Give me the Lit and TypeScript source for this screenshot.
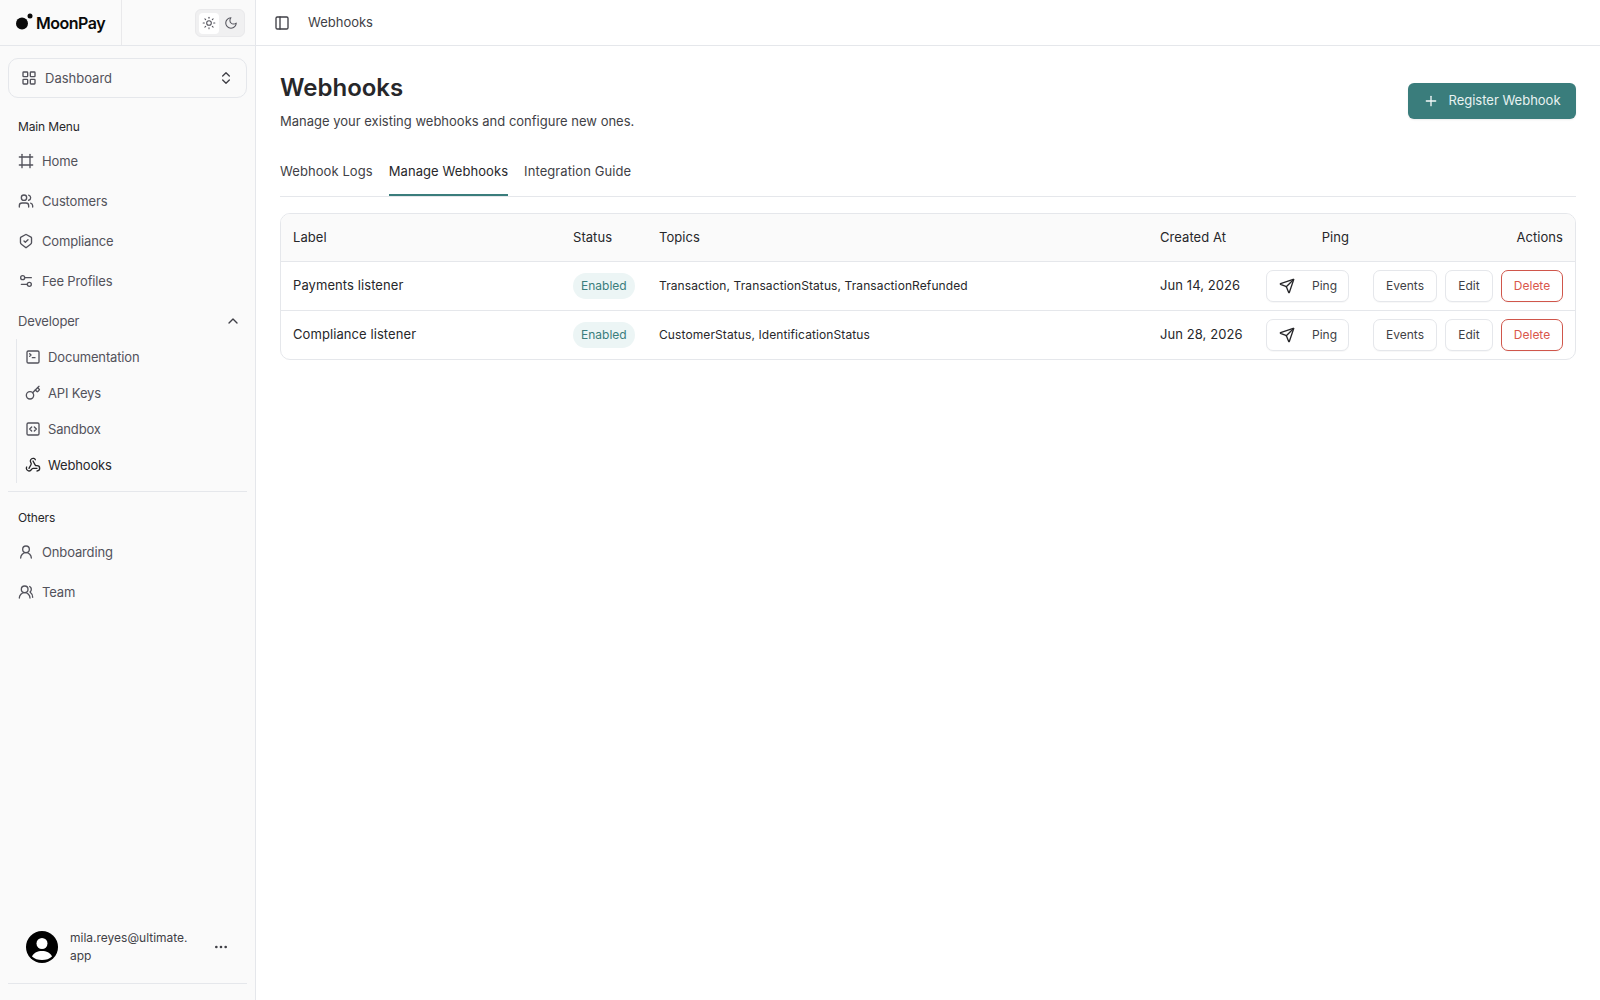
import { LitElement, html, css, svg, TemplateResult } from "lit";
import { customElement } from "lit/decorators.js";

const I: Record<string, TemplateResult> = {
  frame: svg`<line x1="22" x2="2" y1="6" y2="6"/><line x1="22" x2="2" y1="18" y2="18"/><line x1="6" x2="6" y1="2" y2="22"/><line x1="18" x2="18" y1="2" y2="22"/>`,
  users: svg`<path d="M16 21v-2a4 4 0 0 0-4-4H6a4 4 0 0 0-4 4v2"/><circle cx="9" cy="7" r="4"/><path d="M22 21v-2a4 4 0 0 0-3-3.87"/><path d="M16 3.13a4 4 0 0 1 0 7.75"/>`,
  shield: svg`<path d="M11 2.6a2 2 0 0 1 2 0l6.500 3.600a1.500 1.500 0 0 1 .8 1.300v6.800c0 1-.5 1.900-1.400 2.500L13 21.500a2 2 0 0 1-2 0l-5.900-4.700c-.9-.6-1.400-1.500-1.400-2.500V7.500a1.500 1.500 0 0 1 .8-1.300z"/><path d="m9 12 2 2 4-4"/>`,
  sliders: svg`<path d="M20 7h-9"/><path d="M14 17H5"/><circle cx="17" cy="17" r="3"/><circle cx="7" cy="7" r="3"/>`,
  terminal: svg`<path d="m7 11 2-2-2-2"/><path d="M11 13h4"/><rect width="18" height="18" x="3" y="3" rx="2"/>`,
  key: svg`<path d="m15.500 7.500 2.300 2.300a1 1 0 0 0 1.400 0l2.100-2.100a1 1 0 0 0 0-1.400L19 4"/><path d="m21 2-9.600 9.600"/><circle cx="7.500" cy="15.500" r="5.500"/>`,
  code: svg`<path d="m10 9-3 3 3 3"/><path d="m14 15 3-3-3-3"/><rect width="18" height="18" x="3" y="3" rx="2"/>`,
  webhook: svg`<path d="M18 16.980h-5.990c-1.100 0-1.950.94-2.480 1.900A4 4 0 0 1 2 17c.01-.7.2-1.400.57-2"/><path d="m6 17 3.130-5.780c.53-.97.1-2.180-.5-3.100a4 4 0 1 1 6.890-4.060"/><path d="m12 6 3.130 5.730C15.660 12.700 16.900 13 18 13a4 4 0 0 1 0 8"/>`,
  user: svg`<circle cx="12" cy="8" r="5"/><path d="M20 21a8 8 0 0 0-16 0"/>`,
  team: svg`<path d="M18 21a8 8 0 0 0-16 0"/><circle cx="10" cy="8" r="5"/><path d="M22 20c0-3.370-2-6.500-4-8a5 5 0 0 0-.45-8.300"/>`,
  sun: svg`<circle cx="12" cy="12" r="4"/><path d="M12 2v2"/><path d="M12 20v2"/><path d="m4.930 4.930 1.410 1.410"/><path d="m17.660 17.660 1.410 1.410"/><path d="M2 12h2"/><path d="M20 12h2"/><path d="m6.340 17.660-1.410 1.410"/><path d="m19.070 4.930-1.410 1.410"/>`,
  moon: svg`<path d="M12 3a6 6 0 0 0 9 9 9 9 0 1 1-9-9Z"/>`,
  grid: svg`<rect width="7" height="7" x="3" y="3" rx="1"/><rect width="7" height="7" x="14" y="3" rx="1"/><rect width="7" height="7" x="14" y="14" rx="1"/><rect width="7" height="7" x="3" y="14" rx="1"/>`,
  updown: svg`<path d="m7 15 5 5 5-5"/><path d="m7 9 5-5 5 5"/>`,
  up: svg`<path d="m18 15-6-6-6 6"/>`,
  panel: svg`<rect width="18" height="18" x="3" y="3" rx="2"/><path d="M9 3v18"/>`,
  send: svg`<path d="M14.536 21.686a.5.5 0 0 0 .937-.024l6.500-19a.496.496 0 0 0-.635-.635l-19 6.500a.5.5 0 0 0-.024.937l7.930 3.180a2 2 0 0 1 1.112 1.110z"/><path d="m21.854 2.147-10.940 10.939"/>`,
  plus: svg`<path d="M5 12h14"/><path d="M12 5v14"/>`,
  dots: svg`<circle cx="12" cy="12" r="1"/><circle cx="19" cy="12" r="1"/><circle cx="5" cy="12" r="1"/>`,
};

const icon = (n: string, cls = "") =>
  html`<svg class="ic ${cls}" viewBox="0 0 24 24" fill="none" stroke="currentColor" stroke-width="2" stroke-linecap="round" stroke-linejoin="round">${I[n]}</svg>`;

const mainItems = [["frame", "Home"], ["users", "Customers"], ["shield", "Compliance"], ["sliders", "Fee Profiles"]];
const devItems = [["terminal", "Documentation"], ["key", "API Keys"], ["code", "Sandbox"], ["webhook", "Webhooks"]];
const otherItems = [["user", "Onboarding"], ["team", "Team"]];
const rows = [
  { label: "Payments listener", topics: "Transaction, TransactionStatus, TransactionRefunded", date: "Jun 14, 2026" },
  { label: "Compliance listener", topics: "CustomerStatus, IdentificationStatus", date: "Jun 28, 2026" },
];

@customElement("app-root")
export class AppRoot extends LitElement {
  static styles = css`
    :host { display: block; height: 1000px; font-family: Inter, "Liberation Sans", sans-serif; color: #27272a; background: #fff; }
    * { box-sizing: border-box; }
    .app { display: flex; height: 1000px; overflow: hidden; }
    .ic { width: 16px; height: 16px; flex: none; display: block; }

    .side { width: 256px; flex: none; background: #fafafa; border-right: 1px solid #e5e7eb; display: flex; flex-direction: column; }
    .brand { height: 46px; flex: none; display: flex; border-bottom: 1px solid #e5e7eb; }
    .logo { width: 122px; border-right: 1px solid #e9e9eb; display: flex; align-items: center; padding-left: 16px; gap: 0; color: #0a0a0a; }
    .logo svg { width: 20px; height: 18px; display: block; margin-top: -1px; }
    .logo span { font-size: 16px; font-weight: 600; letter-spacing: -0.5px; }
    .theme { margin-left: 73px; margin-top: 9px; width: 50px; height: 28px; background: #f0f0f1; border: 1px solid #e9e9eb; border-radius: 6px; display: flex; align-items: center; padding: 3px; color: #52525b; }
    .theme div { width: 21px; height: 21px; display: flex; align-items: center; justify-content: center; border-radius: 4px; }
    .theme .on { background: #fff; }
    .theme .moon { margin-left: 2px; }
    .theme .ic { width: 14px; height: 14px; stroke-width: 1.800; }

    .selector { margin: 12px 8px 0 8px; height: 40px; border: 1px solid #e5e7eb; border-radius: 10px; display: flex; align-items: center; padding: 0 12px; gap: 8px; font-size: 13px; color: #52525b; flex: none; }
    .selector .ic { width: 16px; height: 16px; }
    .selector .ic:last-child { margin-left: auto; color: #3f3f46; }
    .selector span { margin-top: -1px; }

    .group { font-size: 12px; font-weight: 400; color: #27272a; padding-left: 18px; line-height: 16px; letter-spacing: -0.15px; }
    .g1 { margin-top: 21px; margin-bottom: 6px; }
    .item { height: 40px; display: flex; align-items: center; gap: 8px; padding-left: 18px; font-size: 13px; color: #52525b; flex: none; letter-spacing: -0.15px; }
    .dev { height: 40px; display: flex; align-items: center; padding: 0 14px 0 18px; font-size: 13px; color: #52525b; justify-content: space-between; flex: none; letter-spacing: -0.15px; }
    .dev .ic { width: 16px; height: 16px; color: #3f3f46; }
    .sub { margin-left: 16px; border-left: 1px solid #e5e7eb; margin-top: -2px; flex: none; }
    .sub .item { height: 36px; padding-left: 8px; gap: 7px; }
    .sub .item.cur { color: #27272a; }
    .rule { height: 1px; background: #e5e7eb; margin: 8px 8px 0; flex: none; }
    .g2 { margin-top: 18px; margin-bottom: 6px; }
    .spacer { flex: 1; }
    .foot { display: flex; align-items: center; padding: 0 26px 0 26px; gap: 12px; height: 54px; flex: none; }
    .foot .av { width: 32px; height: 32px; flex: none; display: block; }
    .foot .mail { font-size: 12px; line-height: 18px; width: 128px; color: #3f3f46; }
    .foot .ic { margin-left: auto; width: 16px; height: 16px; color: #3f3f46; }
    .fr { height: 1px; background: #e5e7eb; margin: 9px 8px 16px; flex: none; }

    .main { flex: 1; min-width: 0; }
    .top { height: 46px; border-bottom: 1px solid #e5e7eb; display: flex; align-items: center; padding-left: 18px; gap: 18px; font-size: 13px; color: #3f3f46; }
    .top .ic { color: #3f3f46; }
    .top span { margin-top: -1px; }
    .body { padding: 26px 24px 0; }
    .head { display: flex; justify-content: space-between; align-items: center; }
    h1 { margin: 0; font-size: 24px; line-height: 32px; font-weight: 600; color: #27272a; }
    .head p { margin: 7px 0 0; font-size: 13px; line-height: 20px; color: #3f3f46; }
    .reg { width: 168px; height: 36px; background: #3a7d7c; color: #e8f3f2; border-radius: 6px; display: flex; align-items: center; justify-content: center; gap: 9px; font-size: 13px; margin-top: -2px; box-shadow: 0 1px 2px rgba(0,0,0,.08); }
    .reg .ic { width: 16px; height: 16px; color: #f4f9f9; }
    .reg span { margin-top: -1px; }
    .tabs { display: flex; gap: 16px; margin-top: 20px; border-bottom: 1px solid #e5e7eb; height: 46px; }
    .tab { height: 45px; line-height: 41px; font-size: 13px; color: #3f3f46; letter-spacing: 0.08px; }
    .tab.on { color: #27272a; border-bottom: 2px solid #3a7d7c; }

    .table { margin-top: 16px; border: 1px solid #e5e7eb; border-radius: 10px; overflow: hidden; }
    .row { display: grid; grid-template-columns: 280px 86px 501px 106px 107px 1fr; align-items: center; height: 49px; border-top: 1px solid #e5e7eb; font-size: 13px; color: #27272a; }
    .row.th { height: 47px; border-top: none; background: #fafafa; letter-spacing: 0.05px; }
    .row > div { padding: 0 12px; white-space: nowrap; }
    .row.th > div { padding-bottom: 2px; }
    .end { display: flex; justify-content: flex-end; gap: 8px; }
    .row .cell { padding-bottom: 2px; letter-spacing: 0.08px; }
    .row .topics { font-size: 12px; letter-spacing: 0.1px; }
    .pill { display: inline-block; height: 26px; line-height: 26px; padding: 0 8px; background: #ecf5f5; color: #3a7d7c; border-radius: 13px; font-size: 12px; vertical-align: middle; }
    .btn { height: 32px; border: 1px solid #e5e7eb; border-radius: 7px; background: #fff; display: flex; align-items: center; justify-content: center; font-size: 12px; color: #3f3f46; box-shadow: 0 1px 1px rgba(0,0,0,.03); padding-bottom: 1px; }
    .btn.ping { width: 83px; gap: 17px; padding-left: 1px; }
    .btn.ping .ic { width: 16px; height: 16px; color: #27272a; }
    .btn.ev { width: 64px; }
    .btn.ed { width: 48px; }
    .btn.del { width: 62px; border-color: #d0564b; color: #d9574c; }
  `;

  private navItem(i: string[], cur = false) {
    return html`<div class="item ${cur ? "cur" : ""}">${icon(i[0])}<span>${i[1]}</span></div>`;
  }

  render() {
    return html`<div class="app">
      <aside class="side">
        <div class="brand">
          <div class="logo">
            <svg viewBox="0 0 20 18"><circle cx="6" cy="10.500" r="6" fill="#0a0a0a"/><circle cx="14" cy="3" r="2.500" fill="#0a0a0a"/></svg>
            <span>MoonPay</span>
          </div>
          <div class="theme"><div class="on">${icon("sun")}</div><div class="moon">${icon("moon")}</div></div>
        </div>
        <div class="selector">${icon("grid")}<span>Dashboard</span>${icon("updown")}</div>
        <div class="group g1">Main Menu</div>
        ${mainItems.map((i) => this.navItem(i))}
        <div class="dev"><span>Developer</span>${icon("up")}</div>
        <div class="sub">${devItems.map((i) => this.navItem(i, i[1] === "Webhooks"))}</div>
        <div class="rule"></div>
        <div class="group g2">Others</div>
        ${otherItems.map((i) => this.navItem(i))}
        <div class="spacer"></div>
        <div class="foot">
          <svg class="av" viewBox="0 0 32 32"><circle cx="16" cy="16" r="16" fill="#000"/><circle cx="16" cy="12.500" r="5.500" fill="#fff"/><path d="M6 25.500C8 21.500 11.500 20 16 20s8 1.500 10 5.500C23.500 28 20 29 16 29S8.500 28 6 25.500Z" fill="#fff"/></svg>
          <div class="mail">mila.reyes@ultimate.<br />app</div>
          ${icon("dots")}
        </div>
        <div class="fr"></div>
      </aside>
      <main class="main">
        <div class="top">${icon("panel")}<span>Webhooks</span></div>
        <div class="body">
          <div class="head">
            <div>
              <h1>Webhooks</h1>
              <p>Manage your existing webhooks and configure new ones.</p>
            </div>
            <div class="reg">${icon("plus")}<span>Register Webhook</span></div>
          </div>
          <div class="tabs">
            <div class="tab">Webhook Logs</div>
            <div class="tab on">Manage Webhooks</div>
            <div class="tab">Integration Guide</div>
          </div>
          <div class="table">
            <div class="row th">
              <div>Label</div><div>Status</div><div>Topics</div><div>Created At</div>
              <div class="end">Ping</div><div class="end">Actions</div>
            </div>
            ${rows.map((r) => html`<div class="row">
              <div class="cell">${r.label}</div>
              <div><span class="pill">Enabled</span></div>
              <div class="cell topics">${r.topics}</div>
              <div class="cell">${r.date}</div>
              <div class="end"><div class="btn ping">${icon("send")}<span>Ping</span></div></div>
              <div class="end"><div class="btn ev">Events</div><div class="btn ed">Edit</div><div class="btn del">Delete</div></div>
            </div>`)}
          </div>
        </div>
      </main>
    </div>`;
  }
}
